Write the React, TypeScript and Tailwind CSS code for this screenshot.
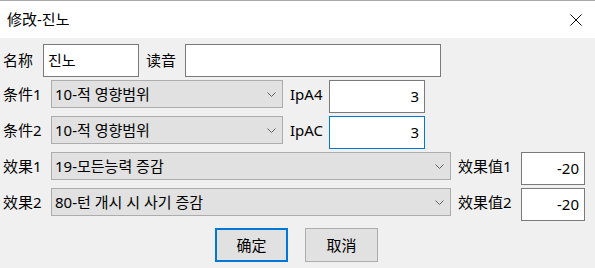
import React from "react";

const Chevron = () => (
  <svg width="9" height="5" viewBox="0 0 9 5" className="shrink-0">
    <polyline points="0.5,0.5 4.5,4.5 8.5,0.5" fill="none" stroke="#606060" strokeWidth="1" />
  </svg>
);

const Combo = ({ text, w }: { text: string; w: string }) => (
  <div
    className={`${w} h-[28px] shrink-0 bg-[#e1e1e1] border border-[#adadad] flex items-center justify-between pl-[3px] pr-[6px] text-[15px] leading-none text-black`}
    style={{ fontFamily: '"Noto Sans", "Noto Sans CJK KR", sans-serif' }}
  >
    <span className="whitespace-nowrap">{text}</span>
    <Chevron />
  </div>
);

const Label = ({ text, w, ml = "" }: { text: string; w: string; ml?: string }) => (
  <div className={`${w} ${ml} h-[28px] shrink-0 flex items-center text-[15px] leading-none whitespace-nowrap`}>{text}</div>
);

export default function App() {
  return (
    <div
      className="w-[595px] h-[268px] bg-[#f0f0f0] flex flex-col text-black overflow-hidden"
      style={{ fontFamily: '"Noto Sans", "Noto Sans CJK SC", sans-serif' }}
    >
      <div className="h-[38px] shrink-0 bg-white border-t border-[#a8a8a8] flex items-center justify-between pl-[7px] pr-[13px]">
        <span className="text-[15px] leading-none" style={{ fontFamily: '"Noto Sans", "Noto Sans CJK SC", sans-serif' }}>修改-진노</span>
        <svg width="12" height="12" viewBox="0 0 12 12">
          <line x1="0.5" y1="0.5" x2="11.5" y2="11.5" stroke="#111" strokeWidth="1" />
          <line x1="11.5" y1="0.5" x2="0.5" y2="11.5" stroke="#111" strokeWidth="1" />
        </svg>
      </div>

      <div className="flex flex-col pt-[6px] pl-[3px] gap-[3px]">
        <div className="flex items-center h-[33px]">
          <div className="w-[40px] text-[15px] leading-none">名称</div>
          <div
            className="w-[96px] h-[33px] bg-white border border-[#7a7a7a] flex items-center pl-[4px] text-[15px] leading-none"
            style={{ fontFamily: '"Noto Sans", "Noto Sans CJK KR", sans-serif' }}
          >
            진노
          </div>
          <div className="w-[39px] ml-[7px] text-[15px] leading-none">读音</div>
          <div className="w-[256px] h-[33px] bg-white border border-[#7a7a7a]" />
        </div>

        <div className="flex items-start h-[33px]">
          <Label text="条件1" w="w-[48px]" />
          <Combo text="10-적 영향범위" w="w-[232px]" />
          <Label text="IpA4" w="w-[39px]" ml="ml-[7px]" />
          <div className="w-[96px] h-[33px] bg-white border border-[#7a7a7a] flex items-center justify-end pr-[5px] text-[15px] leading-none">3</div>
        </div>

        <div className="flex items-start h-[33px]">
          <Label text="条件2" w="w-[48px]" />
          <Combo text="10-적 영향범위" w="w-[232px]" />
          <Label text="IpAC" w="w-[39px]" ml="ml-[7px]" />
          <div className="w-[96px] h-[33px] bg-white border border-[#0078d7] flex items-center justify-end pr-[5px] text-[15px] leading-none">3</div>
        </div>

        <div className="flex items-start h-[33px]">
          <Label text="效果1" w="w-[48px]" />
          <Combo text="19-모든능력 증감" w="w-[400px]" />
          <Label text="效果值1" w="w-[63px]" ml="ml-[7px]" />
          <div className="w-[64px] h-[33px] bg-white border border-[#7a7a7a] flex items-center justify-end pr-[5px] text-[15px] leading-none">-20</div>
        </div>

        <div className="flex items-start h-[33px]">
          <Label text="效果2" w="w-[48px]" />
          <Combo text="80-턴 개시 시 사기 증감" w="w-[400px]" />
          <Label text="效果值2" w="w-[63px]" ml="ml-[7px]" />
          <div className="w-[64px] h-[33px] bg-white border border-[#7a7a7a] flex items-center justify-end pr-[5px] text-[15px] leading-none">-20</div>
        </div>
      </div>

      <div className="flex pl-[215px] pt-[7px] gap-[17px]">
        <div className="w-[73px] h-[34px] bg-[#e1e1e1] border-2 border-[#0078d7] flex items-center justify-center text-[15px] leading-none">确定</div>
        <div className="w-[73px] h-[34px] bg-[#e1e1e1] border border-[#adadad] flex items-center justify-center text-[15px] leading-none">取消</div>
      </div>
    </div>
  );
}
